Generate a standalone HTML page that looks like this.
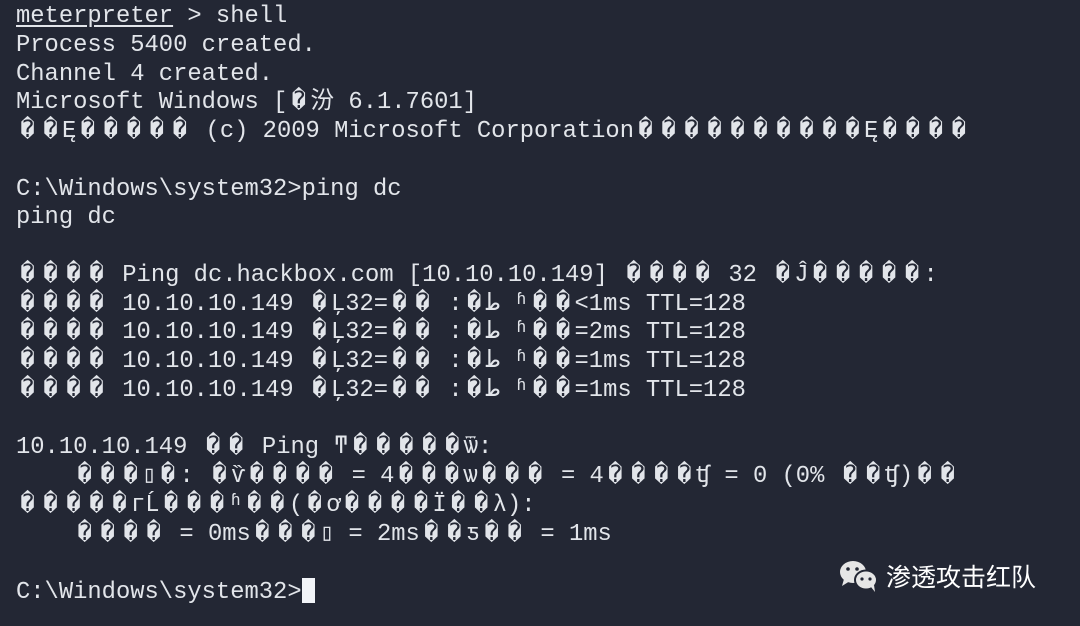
<!DOCTYPE html>
<html><head><meta charset="utf-8">
<style>
html,body{margin:0;padding:0;}
body{width:1080px;height:626px;overflow:hidden;background:#232734;position:relative;}
pre{margin:0;position:absolute;left:16px;top:3px;font-family:"Liberation Mono","DejaVu Sans Mono","Noto Sans CJK SC",monospace;font-size:23.8px;line-height:28.75px;color:#e2e5ea;white-space:pre;}
i{font-style:normal;display:inline-block;width:23px;text-align:center;}
u{text-decoration:underline;text-underline-offset:3px;}
.cur{display:inline-block;width:13px;height:25px;background:#f2f4f8;vertical-align:-5px;}
.wm{position:absolute;left:838px;top:558px;display:flex;align-items:center;color:#fff;font-family:"Noto Sans CJK SC",sans-serif;font-size:25px;}
.wm svg{margin-right:6px;}
</style></head><body>
<pre><u>meterpreter</u> &gt; shell
Process 5400 created.
Channel 4 created.
Microsoft Windows [<i>�</i>汾 6.1.7601]
<i>�</i><i>�</i>Ę<i>�</i><i>�</i><i>�</i><i>�</i><i>�</i> (c) 2009 Microsoft Corporation<i>�</i><i>�</i><i>�</i><i>�</i><i>�</i><i>�</i><i>�</i><i>�</i><i>�</i><i>�</i>Ę<i>�</i><i>�</i><i>�</i><i>�</i>

C:\Windows\system32&gt;ping dc
ping dc

<i>�</i><i>�</i><i>�</i><i>�</i> Ping dc.hackbox.com [10.10.10.149] <i>�</i><i>�</i><i>�</i><i>�</i> 32 <i>�</i>Ĵ<i>�</i><i>�</i><i>�</i><i>�</i><i>�</i>:
<i>�</i><i>�</i><i>�</i><i>�</i> 10.10.10.149 <i>�</i>Ļ32=<i>�</i><i>�</i> :<i>�</i>ط ʱ<i>�</i><i>�</i>&lt;1ms TTL=128
<i>�</i><i>�</i><i>�</i><i>�</i> 10.10.10.149 <i>�</i>Ļ32=<i>�</i><i>�</i> :<i>�</i>ط ʱ<i>�</i><i>�</i>=2ms TTL=128
<i>�</i><i>�</i><i>�</i><i>�</i> 10.10.10.149 <i>�</i>Ļ32=<i>�</i><i>�</i> :<i>�</i>ط ʱ<i>�</i><i>�</i>=1ms TTL=128
<i>�</i><i>�</i><i>�</i><i>�</i> 10.10.10.149 <i>�</i>Ļ32=<i>�</i><i>�</i> :<i>�</i>ط ʱ<i>�</i><i>�</i>=1ms TTL=128

10.10.10.149 <i>�</i><i>�</i> Ping ͳ<i>�</i><i>�</i><i>�</i><i>�</i><i>�</i>ѿ:
    <i>�</i><i>�</i><i>�</i>▯<i>�</i>: <i>�</i>ѷ<i>�</i><i>�</i><i>�</i><i>�</i> = 4<i>�</i><i>�</i><i>�</i>ѡ<i>�</i><i>�</i><i>�</i> = 4<i>�</i><i>�</i><i>�</i><i>�</i>ʧ = 0 (0% <i>�</i><i>�</i>ʧ)<i>�</i><i>�</i>
<i>�</i><i>�</i><i>�</i><i>�</i><i>�</i>гĹ<i>�</i><i>�</i><i>�</i>ʱ<i>�</i><i>�</i>(<i>�</i>ơ<i>�</i><i>�</i><i>�</i><i>�</i>Ï<i>�</i><i>�</i>λ):
    <i>�</i><i>�</i><i>�</i><i>�</i> = 0ms<i>�</i><i>�</i><i>�</i>▯ = 2ms<i>�</i><i>�</i>ƽ<i>�</i><i>�</i> = 1ms

C:\Windows\system32&gt;<span class="cur"></span></pre>
<div class="wm">
<svg width="42" height="36" viewBox="0 0 42 36">
<ellipse cx="15" cy="14" rx="13" ry="11" fill="#e6e6e6"/>
<path d="M6 21 L4 28 L12 23 Z" fill="#e6e6e6"/>
<ellipse cx="28" cy="22" rx="11" ry="9.5" fill="#e6e6e6" stroke="#232734" stroke-width="2"/>
<path d="M33 29 L37 34 L36 27 Z" fill="#e6e6e6"/>
<circle cx="10" cy="11" r="1.8" fill="#232734"/><circle cx="19" cy="11" r="1.8" fill="#232734"/>
<circle cx="24" cy="21" r="1.6" fill="#232734"/><circle cx="32" cy="21" r="1.6" fill="#232734"/>
</svg>渗透攻击红队</div>
</body></html>
